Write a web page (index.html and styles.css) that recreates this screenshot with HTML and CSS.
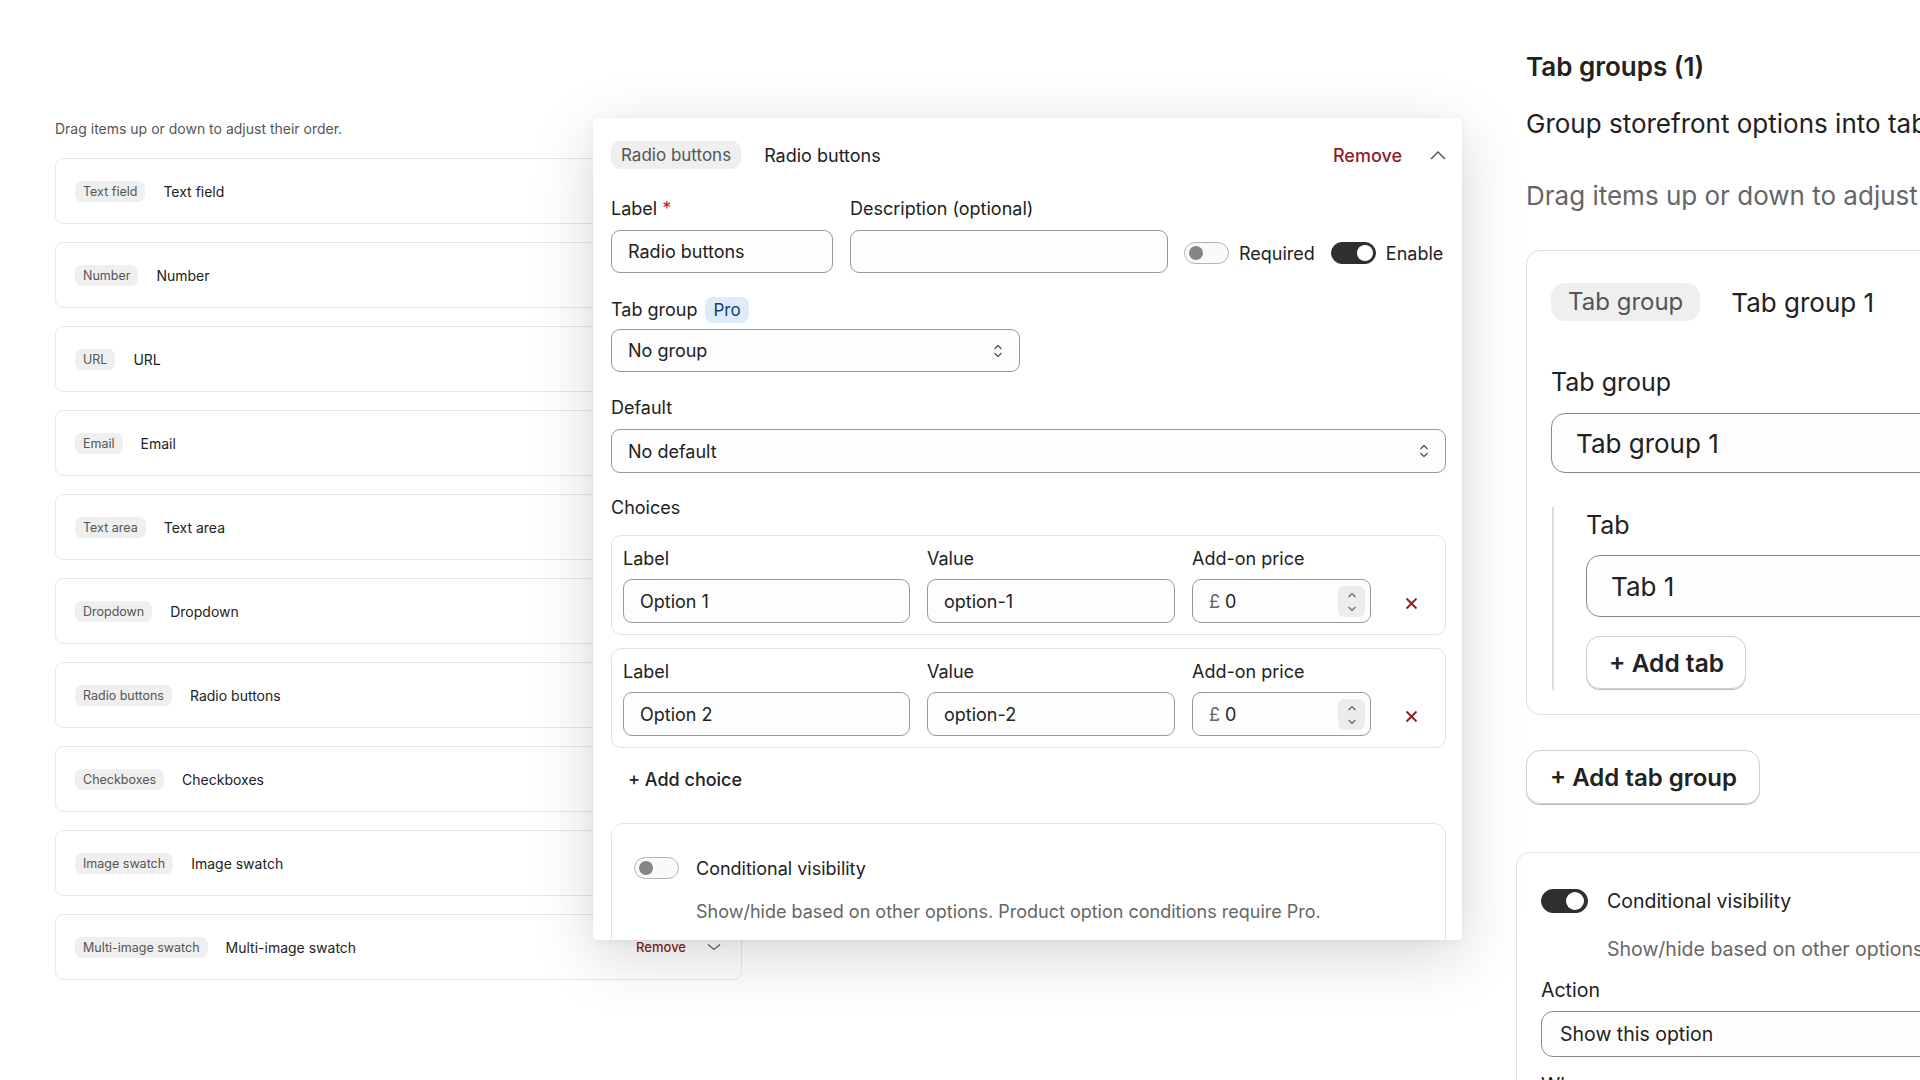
FILE: index.html
```html
<!DOCTYPE html>
<html lang="en">
<head>
    <meta charset="UTF-8">
    <meta name="viewport" content="width=device-width, initial-scale=1.0">
    <title>Product options - field editor</title>
    <link rel="stylesheet" href="styles.css">
</head>
<body>
    <div class="canvas">
        <!-- option list -->
        <section class="list-panel">
            <p class="hint">Drag items up or down to adjust their order.</p>

            <div class="item">
                <span class="tag">Text field</span><span class="item-name">Text field</span>
                <div class="item-actions"><span class="remove">Remove</span><svg width="14" height="8" viewBox="0 0 14 8"><path d="M1 1.5 L7 6.5 L13 1.5" stroke="#666" stroke-width="1.3" fill="none"/></svg></div>
            </div>
            <div class="item">
                <span class="tag">Number</span><span class="item-name">Number</span>
                <div class="item-actions"><span class="remove">Remove</span><svg width="14" height="8" viewBox="0 0 14 8"><path d="M1 1.5 L7 6.5 L13 1.5" stroke="#666" stroke-width="1.3" fill="none"/></svg></div>
            </div>
            <div class="item">
                <span class="tag">URL</span><span class="item-name">URL</span>
                <div class="item-actions"><span class="remove">Remove</span><svg width="14" height="8" viewBox="0 0 14 8"><path d="M1 1.5 L7 6.5 L13 1.5" stroke="#666" stroke-width="1.3" fill="none"/></svg></div>
            </div>
            <div class="item">
                <span class="tag">Email</span><span class="item-name">Email</span>
                <div class="item-actions"><span class="remove">Remove</span><svg width="14" height="8" viewBox="0 0 14 8"><path d="M1 1.5 L7 6.5 L13 1.5" stroke="#666" stroke-width="1.3" fill="none"/></svg></div>
            </div>
            <div class="item">
                <span class="tag">Text area</span><span class="item-name">Text area</span>
                <div class="item-actions"><span class="remove">Remove</span><svg width="14" height="8" viewBox="0 0 14 8"><path d="M1 1.5 L7 6.5 L13 1.5" stroke="#666" stroke-width="1.3" fill="none"/></svg></div>
            </div>
            <div class="item">
                <span class="tag">Dropdown</span><span class="item-name">Dropdown</span>
                <div class="item-actions"><span class="remove">Remove</span><svg width="14" height="8" viewBox="0 0 14 8"><path d="M1 1.5 L7 6.5 L13 1.5" stroke="#666" stroke-width="1.3" fill="none"/></svg></div>
            </div>
            <div class="item">
                <span class="tag">Radio buttons</span><span class="item-name">Radio buttons</span>
                <div class="item-actions"><span class="remove">Remove</span><svg width="14" height="8" viewBox="0 0 14 8"><path d="M1 1.5 L7 6.5 L13 1.5" stroke="#666" stroke-width="1.3" fill="none"/></svg></div>
            </div>
            <div class="item">
                <span class="tag">Checkboxes</span><span class="item-name">Checkboxes</span>
                <div class="item-actions"><span class="remove">Remove</span><svg width="14" height="8" viewBox="0 0 14 8"><path d="M1 1.5 L7 6.5 L13 1.5" stroke="#666" stroke-width="1.3" fill="none"/></svg></div>
            </div>
            <div class="item">
                <span class="tag">Image swatch</span><span class="item-name">Image swatch</span>
                <div class="item-actions"><span class="remove">Remove</span><svg width="14" height="8" viewBox="0 0 14 8"><path d="M1 1.5 L7 6.5 L13 1.5" stroke="#666" stroke-width="1.3" fill="none"/></svg></div>
            </div>
            <div class="item">
                <span class="tag">Multi-image swatch</span><span class="item-name">Multi-image swatch</span>
                <div class="item-actions"><span class="remove">Remove</span><svg width="14" height="8" viewBox="0 0 14 8"><path d="M1 1.5 L7 6.5 L13 1.5" stroke="#666" stroke-width="1.3" fill="none"/></svg></div>
            </div>
        </section>

        <!-- expanded editor, floating over the list -->
        <section class="editor">
            <div class="editor-head">
                <span class="tag tag-lg">Radio buttons</span>
                <span class="editor-title">Radio buttons</span>
                <span class="remove remove-lg">Remove</span>
                <svg width="16" height="10" viewBox="0 0 16 10"><path d="M1 9 L8 2 L15 9" stroke="#555" stroke-width="1.5" fill="none"/></svg>
            </div>

            <div class="field-row">
                <div class="field w-label">
                    <label>Label <span class="star">*</span></label>
                    <div class="input">Radio buttons</div>
                </div>
                <div class="field w-desc">
                    <label>Description (optional)</label>
                    <div class="input"></div>
                </div>
                <div class="switch-group">
                    <span class="toggle"></span><span>Required</span>
                </div>
                <div class="switch-group">
                    <span class="toggle on"></span><span>Enable</span>
                </div>
            </div>

            <div class="field block">
                <label>Tab group <span class="pro">Pro</span></label>
                <div class="input select w-group">No group
                    <svg width="10" height="16" viewBox="0 0 10 16"><path d="M1.5 6 L5 2.5 L8.5 6 M1.5 10 L5 13.5 L8.5 10" stroke="#555" stroke-width="1.3" fill="none"/></svg>
                </div>
            </div>

            <div class="field block">
                <label>Default</label>
                <div class="input select">No default
                    <svg width="10" height="16" viewBox="0 0 10 16"><path d="M1.5 6 L5 2.5 L8.5 6 M1.5 10 L5 13.5 L8.5 10" stroke="#555" stroke-width="1.3" fill="none"/></svg>
                </div>
            </div>

            <div class="section-label">Choices</div>

            <div class="choice">
                <label>Label</label><label>Value</label><label>Add-on price</label><span></span>
                <div class="input">Option 1</div>
                <div class="input">option-1</div>
                <div class="input price"><span class="currency">£</span>&nbsp;0
                    <span class="spinner">
                        <svg width="10" height="24" viewBox="0 0 10 24"><path d="M1.5 7 L5 3.5 L8.5 7 M1.5 17 L5 20.5 L8.5 17" stroke="#666" stroke-width="1.2" fill="none"/></svg>
                    </span>
                </div>
                <svg class="x" width="13" height="13" viewBox="0 0 13 13"><path d="M1.5 1.5 L11.5 11.5 M11.5 1.5 L1.5 11.5" stroke="#8f1d21" stroke-width="1.8"/></svg>
            </div>
            <div class="choice">
                <label>Label</label><label>Value</label><label>Add-on price</label><span></span>
                <div class="input">Option 2</div>
                <div class="input">option-2</div>
                <div class="input price"><span class="currency">£</span>&nbsp;0
                    <span class="spinner">
                        <svg width="10" height="24" viewBox="0 0 10 24"><path d="M1.5 7 L5 3.5 L8.5 7 M1.5 17 L5 20.5 L8.5 17" stroke="#666" stroke-width="1.2" fill="none"/></svg>
                    </span>
                </div>
                <svg class="x" width="13" height="13" viewBox="0 0 13 13"><path d="M1.5 1.5 L11.5 11.5 M11.5 1.5 L1.5 11.5" stroke="#8f1d21" stroke-width="1.8"/></svg>
            </div>

            <div class="add-choice">+ Add choice</div>

            <div class="cond-box">
                <div class="cond-row">
                    <span class="toggle"></span><span>Conditional visibility</span>
                </div>
                <p class="cond-note">Show/hide based on other options. Product option conditions require Pro.</p>
            </div>
        </section>

        <!-- tab groups, zoomed in -->
        <section class="groups-panel">
            <h2>Tab groups (1)</h2>
            <p class="groups-lead">Group storefront options into tabs on the product page.</p>
            <p class="groups-hint">Drag items up or down to adjust their order.</p>

            <div class="group-card">
                <div class="group-head">
                    <span class="tag tag-xl">Tab group</span>
                    <span class="group-title">Tab group 1</span>
                </div>
                <label class="big-label">Tab group</label>
                <div class="big-input">Tab group 1</div>

                <div class="tab-block">
                    <label class="big-label">Tab</label>
                    <div class="big-input">Tab 1</div>
                    <div class="big-btn">+ Add tab</div>
                </div>
            </div>

            <div class="big-btn wide">+ Add tab group</div>

            <div class="rule-card">
                <div class="rule-row">
                    <span class="toggle on toggle-md"></span><span>Conditional visibility</span>
                </div>
                <p class="rule-note">Show/hide based on other options. Product option conditions require Pro.</p>
                <label class="rule-label">Action</label>
                <div class="rule-select">Show this option</div>
                <label class="rule-label">When</label>
            </div>
        </section>
    </div>
</body>
</html>
```

FILE: styles.css
```css
* {
    margin: 0;
    padding: 0;
    box-sizing: border-box;
}

body {
    font-family: 'Inter', 'Noto Sans', sans-serif;
    background: #fff;
    color: #222;
    width: 1920px;
    height: 1080px;
    overflow: hidden;
}

.canvas {
    position: relative;
    display: flex;
    height: 1080px;
    overflow: hidden;
}

/* ---------- left list ---------- */

.list-panel {
    width: 687px;
    margin-left: 55px;
    padding-top: 120px;
    flex-shrink: 0;
}

.hint {
    font-size: 14px;
    line-height: 18px;
    color: #555;
    margin-bottom: 20px;
}

.item {
    display: flex;
    align-items: center;
    gap: 18px;
    height: 66px;
    margin-bottom: 18px;
    padding: 0 20px 0 19px;
    border: 1px solid #e8e8e8;
    border-radius: 8px;
}

.tag {
    background: #efefef;
    color: #555;
    font-size: 12.5px;
    line-height: 15px;
    padding: 3px 8px;
    border-radius: 7px;
}

.item-name {
    font-size: 14px;
    color: #222;
}

.item-actions {
    margin-left: auto;
    display: flex;
    align-items: center;
    gap: 21px;
}

.remove {
    color: #8f1d21;
    font-size: 13px;
    font-weight: 500;
}

/* ---------- floating editor ---------- */

.editor {
    position: absolute;
    left: 593px;
    top: 118px;
    width: 869px;
    height: 822px;
    overflow: hidden;
    background: #fff;
    border-radius: 4px;
    padding: 23px 16px 0 18px;
    font-size: 18px;
    box-shadow: 0 16px 64px rgba(0,0,0,0.16), 0 2px 10px rgba(0,0,0,0.05);
    z-index: 2;
}

.editor-head {
    display: flex;
    align-items: center;
    height: 28px;
}

.tag-lg {
    font-size: 17px;
    line-height: 20px;
    padding: 4px 10px;
    border-radius: 9px;
}

.editor-title {
    margin-left: 23px;
}

.remove-lg {
    margin-left: auto;
    margin-right: 28px;
    font-size: 18px;
}

label {
    display: block;
    line-height: 22px;
}

.star {
    color: #b3261e;
}

.field-row {
    display: flex;
    align-items: flex-end;
    gap: 16px;
    margin-top: 29px;
}

.field label {
    margin-bottom: 10px;
}

.w-label { width: 222px; margin-right: 1px; }
.w-desc { width: 318px; }

.input {
    height: 43px;
    border: 1px solid #999;
    border-radius: 9px;
    background: #fdfdfd;
    padding: 0 16px;
    display: flex;
    align-items: center;
}

.select {
    justify-content: space-between;
    height: 44px;
}

.w-group {
    width: 409px;
    height: 43px;
}

.switch-group {
    display: flex;
    align-items: center;
    gap: 10px;
    height: 43px;
    padding-top: 3px;
}

.toggle {
    position: relative;
    width: 45px;
    height: 22px;
    border: 1px solid #b5b5b5;
    border-radius: 11px;
    background: #fafafa;
    flex-shrink: 0;
}

.toggle::after {
    content: "";
    position: absolute;
    left: 4px;
    top: 3px;
    width: 14px;
    height: 14px;
    border-radius: 50%;
    background: #858585;
}

.toggle.on {
    background: #2f2f2f;
    border-color: #2f2f2f;
}

.toggle.on::after {
    left: auto;
    right: 2px;
    top: 2px;
    width: 16px;
    height: 16px;
    background: #fff;
}

.block {
    margin-top: 24px;
}

.block label {
    display: flex;
    align-items: center;
    gap: 8px;
    line-height: 26px;
    margin-bottom: 6px;
}

.block + .block label {
    line-height: 22px;
    margin-bottom: 10px;
}

.block + .block {
    margin-top: 25px;
}

.pro {
    background: #dcecfb;
    color: #12406e;
    font-size: 17px;
    line-height: 26px;
    padding: 0 8px;
    border-radius: 8px;
}

.section-label {
    line-height: 22px;
    margin-top: 24px;
    margin-bottom: 16px;
}

.choice {
    display: grid;
    grid-template-columns: 287px 248px 179px 1fr;
    column-gap: 17px;
    row-gap: 9px;
    align-items: center;
    padding: 12px 11px 11px 11px;
    border: 1px solid #e4e4e4;
    border-radius: 10px;
    margin-bottom: 13px;
}

.choice .input {
    height: 44px;
}

.price {
    position: relative;
}

.currency {
    color: #666;
}

.spinner {
    position: absolute;
    right: 5px;
    top: 6px;
    width: 27px;
    height: 31px;
    background: #ececec;
    border-radius: 6px;
    display: flex;
    align-items: center;
    justify-content: center;
}

.x {
    justify-self: center;
    margin-top: 4px;
}

.add-choice {
    font-weight: 500;
    line-height: 22px;
    padding-left: 17px;
    margin-top: 21px;
}

.cond-box {
    margin-top: 32px;
    border: 1px solid #e4e4e4;
    border-radius: 12px;
    padding: 33px 22px 40px 22px;
}

.cond-row {
    display: flex;
    align-items: center;
    gap: 17px;
}

.cond-note {
    color: #666;
    line-height: 22px;
    margin-top: 22px;
    padding-left: 62px;
}

/* ---------- tab groups (zoomed) ---------- */

.groups-panel {
    margin-left: 784px;
    padding-top: 51px;
    width: 700px;
    flex-shrink: 0;
    white-space: nowrap;
}

.groups-panel h2 {
    font-size: 26px;
    font-weight: 600;
    line-height: 32px;
}

.groups-lead {
    font-size: 26px;
    line-height: 34px;
    margin-top: 24px;
}

.groups-hint {
    font-size: 26px;
    line-height: 32px;
    color: #666;
    margin-top: 39px;
}

.group-card {
    margin-top: 38px;
    border: 1px solid #dedede;
    border-radius: 14px;
    padding: 32px 24px 24px 24px;
}

.group-head {
    display: flex;
    align-items: center;
    gap: 31px;
}

.tag-xl {
    font-size: 24px;
    line-height: 30px;
    padding: 4px 17px;
    border-radius: 14px;
}

.group-title {
    font-size: 26px;
}

.big-label {
    font-size: 25px;
    line-height: 32px;
}

.group-card > .big-label {
    margin-top: 45px;
}

.big-input {
    margin-top: 15px;
    height: 60px;
    border: 1px solid #8a8a8a;
    border-radius: 14px;
    background: #fdfdfd;
    padding: 0 24px;
    display: flex;
    align-items: center;
    font-size: 26px;
}

.tab-block {
    margin-top: 34px;
    margin-left: 1px;
    border-left: 2px solid #ddd;
    padding: 2px 0 1px 32px;
}

.tab-block .big-input {
    margin-top: 14px;
    height: 62px;
}

.big-btn {
    display: inline-flex;
    align-items: center;
    height: 53px;
    margin-top: 19px;
    padding: 0 21px 0 22px;
    border: 1px solid #cfcfcf;
    border-radius: 14px;
    font-size: 24.5px;
    font-weight: 600;
    box-shadow: 0 1px 0 #bbb;
}

.big-btn.wide {
    margin-top: 35px;
    height: 54px;
    padding: 0 22px 0 23px;
    font-size: 24px;
}

.rule-card {
    margin-top: 48px;
    margin-left: -10px;
    background: #fff;
    border: 1px solid #e2e2e2;
    border-radius: 14px;
    padding: 36px 24px 0 24px;
    height: 300px;
    font-size: 19.5px;
}

.rule-row {
    display: flex;
    align-items: center;
    gap: 19px;
}

.toggle-md {
    width: 47px;
    height: 24px;
    border-radius: 12px;
}

.toggle-md.on::after {
    width: 18px;
    height: 18px;
    right: 3px;
    top: 2px;
}

.rule-note {
    color: #666;
    line-height: 26px;
    margin-top: 23px;
    padding-left: 66px;
}

.rule-label {
    line-height: 26px;
    margin-top: 15px;
}

.rule-select {
    margin-top: 8px;
    height: 46px;
    border: 1px solid #8a8a8a;
    border-radius: 12px;
    background: #fdfdfd;
    padding: 0 18px;
    display: flex;
    align-items: center;
}
```
